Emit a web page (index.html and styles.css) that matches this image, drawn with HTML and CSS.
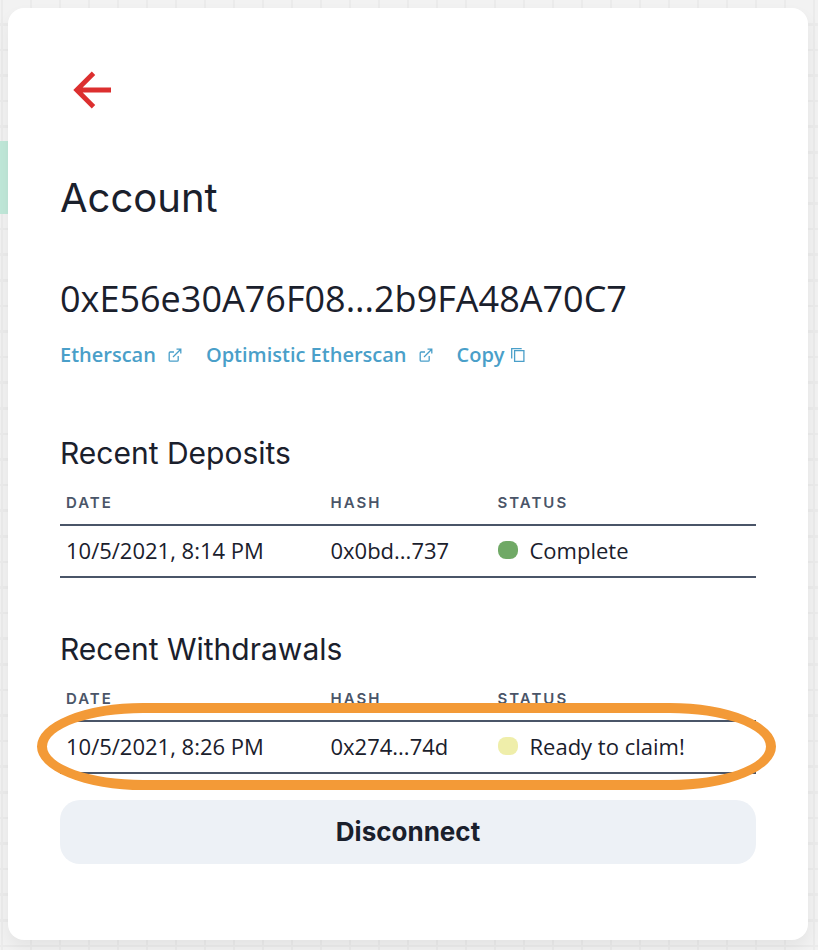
FILE: index.html
```html
<!DOCTYPE html>
<html lang="en">
<head>
<meta charset="utf-8">
<meta name="viewport" content="width=device-width, initial-scale=1">
<title>Account</title>
<link rel="stylesheet" href="styles.css">
</head>
<body>
<span class="backdrop-strip" aria-hidden="true"></span>
<main class="card">
  <button class="back" type="button" aria-label="Back">
    <svg viewBox="0 0 40 40" width="40" height="40" fill="none" stroke="#dc2f2f" stroke-width="4.8"><path d="M39 20H4M21.500 3.200 4.700 20l16.800 16.800"/></svg>
  </button>
  <h1 class="title">Account</h1>
  <p class="address">0xE56e30A76F08...2b9FA48A70C7</p>
  <nav class="links">
    <a class="link" href="#etherscan">Etherscan
      <svg class="icon" viewBox="0 0 14 14" fill="none" stroke="currentColor" stroke-width="1.300"><path d="M6 4H2.200Q1.200 4 1.200 5v7.200q0 1 1 1h7q1 0 1-1V8M5 9l7.500-7.500M8.500 1.200h4.300v4.300"/></svg>
    </a>
    <a class="link" href="#optimistic">Optimistic Etherscan
      <svg class="icon" viewBox="0 0 14 14" fill="none" stroke="currentColor" stroke-width="1.300"><path d="M6 4H2.200Q1.200 4 1.200 5v7.200q0 1 1 1h7q1 0 1-1V8M5 9l7.500-7.500M8.500 1.200h4.300v4.300"/></svg>
    </a>
    <button class="link copy" type="button">Copy
      <svg class="icon" viewBox="0 0 14 14" fill="none" stroke="currentColor" stroke-width="1.300"><path d="M3.600 2.600h9.300v10.700H3.600zM.700 10.500V.700h10"/></svg>
    </button>
  </nav>
  <section class="history">
    <h2 class="subtitle" id="deposits">Recent Deposits</h2>
    <table class="table" aria-labelledby="deposits">
      <thead><tr><th class="date">Date</th><th class="hash">Hash</th><th>Status</th></tr></thead>
      <tbody><tr><td>10/5/2021, 8:14 PM</td><td>0x0bd...737</td><td><span class="status"><span class="dot complete"></span>Complete</span></td></tr></tbody>
    </table>
  </section>
  <section class="history">
    <h2 class="subtitle" id="withdrawals">Recent Withdrawals</h2>
    <div class="marked">
      <table class="table" aria-labelledby="withdrawals">
        <thead><tr><th class="date">Date</th><th class="hash">Hash</th><th>Status</th></tr></thead>
        <tbody><tr><td>10/5/2021, 8:26 PM</td><td>0x274...74d</td><td><span class="status"><span class="dot ready"></span>Ready to claim!</span></td></tr></tbody>
      </table>
      <span class="ring" aria-hidden="true"></span>
    </div>
  </section>
  <button class="disconnect" type="button">Disconnect</button>
</main>
</body>
</html>
```
FILE: styles.css
```css
* { box-sizing: border-box; }
body {
  margin: 0;
  padding: 8px 10px 10px 8px;
  color: #1a202c;
  font-family: "Open Sans", "Noto Sans", sans-serif;
  background-color: #f2f2f2;
  background-image:
    repeating-linear-gradient(to bottom, transparent 0, transparent 18%, #ebebeb 18%, #ebebeb 20%),
    linear-gradient(to right, #ebebeb 2px, transparent 2px);
  background-size: 128px 128px, 29px 29px;
  background-position: 0 0, 1px 0;
}
.backdrop-strip {
  position: absolute;
  left: 0;
  top: 141px;
  width: 40px;
  height: 73px;
  background: #c0e8d9;
}
.card {
  position: relative;
  display: flex;
  flex-direction: column;
  align-items: flex-start;
  padding: 62px 52px 76px;
  border-radius: 16px;
  background: #fff;
  box-shadow: 0 8px 16px rgba(0, 0, 0, .06);
}
h1, h2, p { margin: 0; font-weight: 400; }
button { border: 0; font: inherit; color: inherit; cursor: pointer; }
.back { margin-left: 12px; padding: 0; background: none; height: 40px; }
.back svg { display: block; }
.title {
  margin-top: 64px;
  font: 400 40px/48px Inter, sans-serif;
}
.address { margin-top: 50px; font-size: 36px; line-height: 54px; }
.links { display: flex; gap: 24px; margin-top: 14px; }
.link {
  display: flex;
  align-items: center;
  gap: 12px;
  padding: 0;
  background: none;
  color: #4a9fc9;
  font-size: 20px;
  font-weight: 600;
  line-height: 30px;
  text-decoration: none;
}
.copy { gap: 6px; }
.icon { width: 14px; height: 14px; }
.history { width: 100%; margin-top: 52px; }
.links + .history { margin-top: 64px; }
.subtitle { padding-bottom: 2px; font: 400 30px/38px Inter, sans-serif; }
.table { width: 100%; border-spacing: 0; table-layout: fixed; }
.table th {
  height: 52px;
  padding: 8px 6px 0;
  border-bottom: 2px solid #4a5568;
  color: #4a5568;
  font: 600 15px/20px Inter, sans-serif;
  letter-spacing: 2px;
  text-align: left;
  text-transform: uppercase;
}
.table td {
  height: 52px;
  padding: 0 6px 2px;
  border-bottom: 2px solid #4a5568;
  font-size: 22px;
  line-height: 30px;
}
.date { width: 38%; }
.hash { width: 24%; }
.status { display: flex; align-items: center; gap: 12px; }
.dot { width: 20px; height: 18px; border-radius: 8px; }
.complete { background: #70a966; }
.ready { background: #efeeaa; }
.marked { position: relative; }
.ring {
  position: absolute;
  inset: 33px -20px -16px -23px;
  border: 10px solid #f39a37;
  border-radius: 106px / 50%;
}
.disconnect {
  width: 100%;
  height: 64px;
  margin-top: 26px;
  border-radius: 20px;
  background: #edf1f6;
  font: 700 26px/32px Inter, sans-serif;
}
```
